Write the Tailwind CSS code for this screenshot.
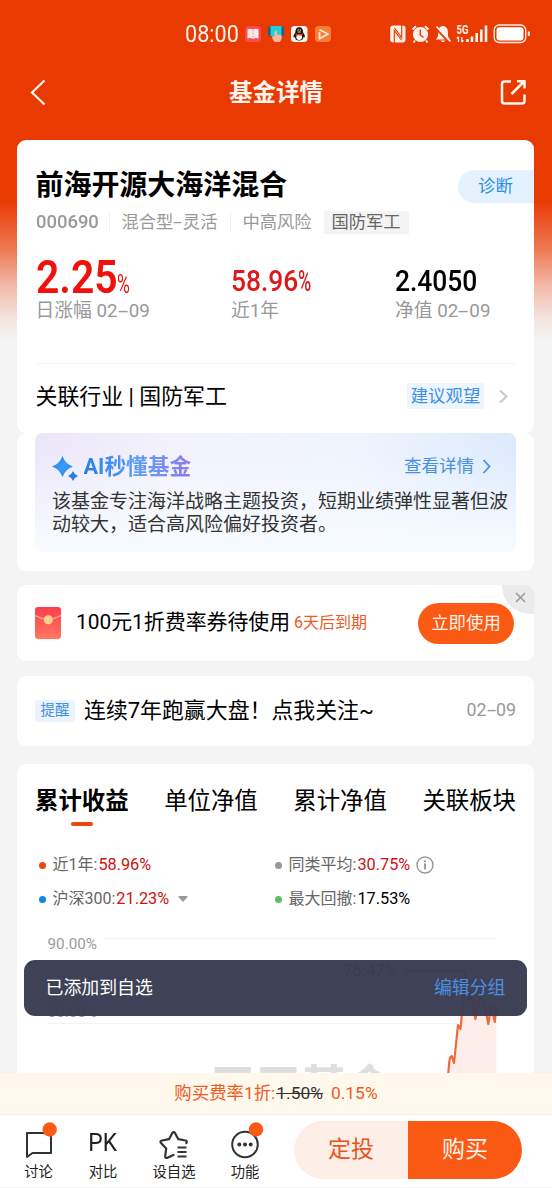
<!DOCTYPE html>
<html lang="zh-CN">
<head>
<meta charset="utf-8">
<title>基金详情</title>
<script src="https://cdn.jsdelivr.net/npm/@tailwindcss/browser@4"></script>
</head>
<body class="bg-[#f4f4f4]">
<div class="relative flex h-[1188px] w-[552px] flex-col overflow-hidden bg-[linear-gradient(to_bottom,#e93a02_0px,#e93a02_200px,#ee7a56_250px,#f2b8a6_285px,#f4e6e2_320px,#f4f4f4_342px)] font-[Roboto,'Noto_Sans_CJK_SC',sans-serif] leading-[1.4] text-black">

  <!-- status bar -->
  <div class="flex h-[68px] shrink-0 items-center pl-[185px] text-[#fff2ea]">
    <div class="w-[60px] whitespace-nowrap text-[24px] leading-none"><span class="inline-block origin-left scale-x-[0.9]">08:00</span></div>
    <svg class="h-[18px] w-[88px] shrink-0" viewBox="0 0 88 18">
      <rect x="0" y="1" width="16" height="16" rx="3.5" fill="#f94b55"/>
      <path d="M2.5 4.2Q5.500 3 8 4.500Q10.500 3 13.500 4.200V13.500Q10.500 12.500 8 14Q5.500 12.500 2.500 13.500Z" fill="#ffe9e6"/><path d="M8 4.500V14" stroke="#f9a3a3" stroke-width=".8"/>
      <rect x="23" y="1" width="16" height="10.500" rx="2" fill="#27606c"/><rect x="25.500" y="1" width="11" height="10" fill="#1fd0dc"/>
      <path d="M29.500 6.500Q31 5 32 7V9.500L36 10Q37.500 11 36.500 14L35 17H29.500L27 13Q26.500 10.500 29.500 11Z" fill="#f6b79f"/>
      <rect x="46" y="1" width="16.500" height="16" rx="3.500" fill="#fff6ee"/>
      <path d="M54.200 2.200C57 2.200 58.200 4.200 58 7.200C59.500 9.200 60.200 11 59.800 12.500L58.500 12C58.200 14.500 57 15.500 54.200 15.500S50.200 14.500 49.900 12L48.600 12.500C48.200 11 49 9.200 50.400 7.200C50.200 4.200 51.500 2.200 54.200 2.200Z" fill="#151515"/>
      <ellipse cx="54.200" cy="12" rx="2.900" ry="3" fill="#fff"/><path d="M50.500 8.200Q54.200 10.200 58 8.200V9.700Q54.200 11.500 50.500 9.700Z" fill="#e53025"/><ellipse cx="54.200" cy="7" rx="2" ry=".8" fill="#f5a623"/><circle cx="53.200" cy="4.900" r=".7" fill="#fff"/><circle cx="55.300" cy="4.900" r=".7" fill="#fff"/>
      <rect x="70" y="1" width="16" height="16" rx="3.500" fill="#fb7c35"/>
      <path d="M74.500 7V13.800L83 9L74.500 4.800" fill="none" stroke="#ffe9d8" stroke-width="1.800" stroke-linejoin="round"/>
    </svg>
    <svg class="ml-[55px] h-[22px] w-[144px] shrink-0" viewBox="388 23 144 22" fill="none">
      <rect x="390.200" y="25.500" width="15.300" height="17" rx="3" fill="#fff2ea"/>
      <path d="M394.300 43V30.500L401.500 40M394.500 28L401.700 37.500V25" stroke="#e93a02" stroke-width="1.200"/>
      <circle cx="420.500" cy="34.500" r="7.600" fill="#fff2ea"/>
      <path d="M412.500 29.500L416 26.300M428.500 29.500L425 26.300M415 40.500L413.500 42.500M426 40.500L427.500 42.500" stroke="#fff2ea" stroke-width="2"/>
      <path d="M420.300 29.500V35L423.500 37.500" stroke="#e93a02" stroke-width="1.500"/>
      <path d="M443 26C447 26.500 448 29.500 448 33V36.500L450 39.500H436L438 36.500V33C438 29.500 439 26.500 443 26ZM440.500 40.500H445.500Q443 43.500 440.500 40.500Z" fill="#fff2ea"/>
      <path d="M436 28.500L449.500 43" stroke="#e93a02" stroke-width="2"/><path d="M436.500 26.500L450.500 41.500" stroke="#fff2ea" stroke-width="1.800"/>
      <text x="456.500" y="34.300" font-size="12" font-weight="700" textLength="12" lengthAdjust="spacingAndGlyphs" fill="#fff2ea">5G</text>
      <path d="M458.500 37V42M456.800 38.500L458.500 36.800M461.800 37V42M463.500 40.300L461.800 42" stroke="#fff2ea" stroke-width="1.300"/>
      <path d="M467.500 39V42M472 36.500V42M476.700 33V42M481.300 29.500V42M486 25.500V42" stroke="#fff2ea" stroke-width="2.600"/>
      <rect x="494.200" y="25" width="31.500" height="17.500" rx="5" stroke="#fff2ea" stroke-width="1.300"/>
      <rect x="496.500" y="27.200" width="27" height="13.200" rx="3" fill="#fff"/>
      <path d="M528.800 31.500V36" stroke="#fff2ea" stroke-width="2"/>
    </svg>
  </div>

  <!-- title bar -->
  <header class="flex h-[72px] shrink-0 items-start justify-between pl-[30px] pr-[25px] pt-[10px] text-[#fff4ee]">
    <svg class="h-[28px] w-[28px]" viewBox="30 78 28 28" fill="none" stroke="currentColor" stroke-width="2.200"><path d="M44.500 80.500L32 92.500L44.500 104.500"/></svg>
    <h1 class="mr-[5px] pt-[1px] text-[23.500px] font-bold leading-[28px]">基金详情</h1>
    <svg class="h-[28px] w-[28px]" viewBox="499 78 28 28" fill="none" stroke="currentColor" stroke-width="2.500"><path d="M511 81.500H504.500Q502 81.500 502 84V101Q502 103.500 504.500 103.500H522Q524.500 103.500 524.500 101V94.500M511.500 94L524 81.500M517 81.200H524.500V88.500"/></svg>
  </header>

  <main class="flex min-h-0 flex-1 flex-col overflow-hidden pl-[17px] pr-[18px]">
    <!-- fund summary -->
    <section class="h-[293px] shrink-0 rounded-[9px] bg-white pl-[18.500px]">
      <div class="flex h-[66px] items-start justify-between pt-[29px]">
        <h2 class="text-[28px] font-bold leading-[34px] tracking-[-0.050px]">前海开源大海洋混合</h2>
        <div class="mt-[1px] h-[33px] w-[76px] rounded-l-full bg-[#e3f2fe] pl-[20px] text-[17.500px] leading-[33px] text-[#2c8fe6]">诊断</div>
      </div>
      <div class="mt-[4px] flex h-[24px] items-center text-[17.300px] leading-[24px] text-[#999]">
        <span class="w-[73.500px] text-[19px] font-medium"><span class="inline-block origin-left scale-x-[0.970]">000690</span></span>
        <span class="h-[19px] w-px bg-[#eee]"></span>
        <span class="w-[119.500px] pl-[11.500px]">混合型<span class="inline-block w-[9.500px] origin-left scale-x-[1.900]">-</span>灵活</span>
        <span class="h-[19px] w-px bg-[#eee]"></span>
        <span class="w-[93px] pl-[12px]">中高风险</span>
        <span class="h-[23px] w-[85px] bg-[#f4f4f4] text-center leading-[23px] text-[#666]">国防军工</span>
      </div>
      <div class="flex h-[68px] items-end whitespace-nowrap leading-none">
        <div class="flex w-[195.500px] items-baseline text-[#f0100c]">
          <span class="w-[81px] text-[47px] font-semibold leading-[50px]"><span class="inline-block origin-left scale-x-[0.870]">2.25</span></span>
          <span class="text-[25px]"><span class="inline-block origin-left scale-x-[0.700]">%</span></span>
        </div>
        <div class="flex w-[164px] text-[30px] font-medium leading-[42px] text-[#dc1a1c]">
          <span class="w-[67px]"><span class="inline-block origin-left scale-x-[0.880]">58.96</span></span>
          <span class="inline-block origin-left scale-x-[0.600]">%</span>
        </div>
        <div class="text-[30px] font-medium leading-[42px]"><span class="inline-block origin-left scale-x-[0.880]">2.4050</span></div>
      </div>
      <div class="mt-[-3px] flex h-[24px] whitespace-nowrap text-[18.800px] leading-[25px] text-[#999]">
        <span class="w-[195.500px]">日涨幅 02<span class="inline-block w-[11px] origin-left scale-x-[2]">-</span>09</span>
        <span class="w-[164px]">近1年</span>
        <span>净值 02<span class="inline-block w-[11px] origin-left scale-x-[2]">-</span>09</span>
      </div>
      <div class="mr-[18px] mt-[40px] flex h-[66px] items-center border-t border-[#f4f4f4]">
        <span class="flex-1 text-[21.900px] leading-[28px]">关联行业 | 国防军工</span>
        <span class="mt-[-2px] h-[26px] w-[77px] rounded-[2px] bg-[#edf5fe] text-center text-[17.400px] leading-[26px] text-[#3f8ee8]">建议观望</span>
        <svg class="ml-[14px] mr-[6px] h-[16px] w-[12px]" viewBox="0 1 12 16" fill="none" stroke="#c8c8c8" stroke-width="2"><path d="M2 2.500L8.500 8.500L2 14.500"/></svg>
      </div>
    </section>

    <!-- AI summary -->
    <section class="h-[137.500px] shrink-0 rounded-[9px] bg-white px-[18px]">
      <div class="h-[119px] rounded-[8px] bg-[linear-gradient(to_bottom,#f6faff00_15%,#f7fbff_95%),linear-gradient(100deg,#ebe6fa_0%,#f3f2fc_28%,#eff4fd_65%,#dae9fe_100%)] pl-[17px] pt-[19px]">
        <div class="flex h-[28px] items-center">
          <svg class="mt-[4px] h-[25px] w-[27px]" viewBox="0 0 27 25"><defs><linearGradient id="g" x1="0" y1="0" x2="1" y2="1"><stop offset="0" stop-color="#2176e0"/><stop offset=".5" stop-color="#3b9bfd"/><stop offset="1" stop-color="#2f80e8"/></linearGradient></defs><path d="M10.500 0Q13.200 7.800 21 10.500Q13.200 13.200 10.500 21Q7.800 13.200 0 10.500Q7.800 7.800 10.500 0Z" fill="url(#g)"/><path d="M21 15Q22.300 18.700 26 20Q22.300 21.300 21 25Q19.700 21.300 16 20Q19.700 18.700 21 15Z" fill="#2f7de0"/></svg>
          <span class="ml-[4.500px] flex-1 pt-[1px]"><span class="bg-linear-to-r from-[#257fe8] via-[#5b9df8] to-[#8b7bec] bg-clip-text text-[21.700px] font-bold leading-[28px] text-transparent">AI秒懂基金</span></span>
          <span class="text-[17.500px] text-[#4a90e2]">查看详情</span>
          <svg class="ml-[7px] mr-[23px] h-[16px] w-[12px]" viewBox="0 0 12 16" fill="none" stroke="#4a90e2" stroke-width="1.800"><path d="M2.500 2L8.500 8.500L2.500 15"/></svg>
        </div>
        <p class="mt-[11px] whitespace-nowrap text-[19px] leading-[22.500px] text-[#333]">该基金专注海洋战略主题投资，短期业绩弹性显著但波<br>动较大，适合高风险偏好投资者。</p>
      </div>
    </section>

    <!-- coupon -->
    <section class="relative mt-[14.500px] flex h-[76px] shrink-0 items-center overflow-hidden rounded-[9px] bg-white pl-[18px] pr-[20px]">
      <svg class="h-[32px] w-[26px]" viewBox="0 0 26 32"><defs><linearGradient id="r" x1="0" y1="0" x2="0" y2="1"><stop offset="0" stop-color="#fb3d4c"/><stop offset="1" stop-color="#ff7863"/></linearGradient></defs><rect width="26" height="32" rx="3" fill="url(#r)"/><path d="M0 8.500Q13 16 26 8.500" fill="none" stroke="#ffb27c" stroke-width="1.200"/><circle cx="13.300" cy="12.800" r="4.600" fill="#fccf8d"/></svg>
      <span class="ml-[15px] w-[218px] whitespace-nowrap text-[20.900px]">100元1折费率券待使用</span>
      <span class="flex-1 whitespace-nowrap text-[16px] text-[#ee5a24]">6天后到期</span>
      <span class="h-[41px] w-[96px] rounded-full bg-[#fa5a14] text-center text-[17.400px] leading-[41px] text-[#fff2ea]">立即使用</span>
      <span class="absolute right-0 top-0 h-[29px] w-[32px] rounded-bl-[28px] bg-[#ebebeb]"><svg class="ml-[13px] mt-[7px] h-[11px] w-[11px]" viewBox="0 0 11 11" stroke="#999" stroke-width="1.500"><path d="M1 1L10 10M10 1L1 10"/></svg></span>
    </section>

    <!-- reminder -->
    <section class="mt-[15px] flex h-[69.500px] shrink-0 items-center rounded-[9px] bg-white px-[18px]">
      <span class="h-[22px] w-[40px] rounded-[3px] bg-[#eaf3fe] text-center text-[14.500px] leading-[22px] text-[#3f8ee8]">提醒</span>
      <span class="ml-[9px] flex-1 whitespace-nowrap pt-[1px] text-[21.900px]">连续7年跑赢大盘！点我关注~</span>
      <span class="whitespace-nowrap text-[17.800px] text-[#999]">02<span class="inline-block w-[9.500px] origin-left scale-x-[1.900]">-</span>09</span>
    </section>

    <!-- performance -->
    <section class="mt-[18px] h-[320px] shrink-0 rounded-t-[9px] bg-white">
      <div class="flex justify-between px-[18px] pt-[20px] text-[23.400px] leading-[34px]">
        <span class="flex flex-col items-center font-bold">累计收益<i class="mt-[4px] h-[4px] w-[22px] rounded-full bg-[#e8480f]"></i></span>
        <span>单位净值</span><span>累计净值</span><span>关联板块</span>
      </div>
      <div class="grid grid-cols-[236px_1fr] pl-[22px] pt-[22.500px] text-[16px] leading-[34px] text-[#666]">
        <div class="flex items-center"><i class="mr-[6.500px] h-[7px] w-[7px] rounded-full bg-[#e8480f]"></i>近1年:<b class="ml-[1px] text-[16.300px] font-normal text-[#cf1010]">58.96%</b></div>
        <div class="flex items-center"><i class="mr-[6.500px] h-[7px] w-[7px] rounded-full bg-[#999]"></i>同类平均:<b class="ml-[1px] text-[16.300px] font-normal text-[#cf1010]">30.75%</b>
          <svg class="ml-[5.500px] h-[18px] w-[18px]" viewBox="0 0 18 18" fill="none" stroke="#999"><circle cx="9" cy="9" r="8" stroke-width="1.400"/><path d="M9 7.500V13.500M9 4.200V6" stroke-width="1.900"/></svg></div>
        <div class="flex items-center"><i class="mr-[6.500px] h-[7px] w-[7px] rounded-full bg-[#1385ea]"></i>沪深300:<b class="ml-[1px] text-[16.300px] font-normal text-[#cf1010]">21.23%</b>
          <svg class="ml-[9px] h-[6px] w-[10px]" viewBox="0 0 10 6"><path d="M1 0H9Q10 .3 9.500 1L5.500 5.600Q5 6 4.500 5.600L.5 1Q0 .3 1 0Z" fill="#999"/></svg></div>
        <div class="flex items-center"><i class="mr-[6.500px] h-[7px] w-[7px] rounded-full bg-[#5cbf63]"></i>最大回撤:<b class="ml-[1px] text-[16.300px] font-normal text-black">17.53%</b></div>
      </div>
      <svg class="mt-[8.500px] block h-[148px] w-[517px]" viewBox="17 925 517 148">
        <path d="M104 938.500H496M48 1023.500H496" stroke="#f3f3f3"/>
        <text x="47.500" y="949" font-size="15.500" fill="#999" textLength="49.500" lengthAdjust="spacingAndGlyphs">90.00%</text>
        <text x="47.500" y="1017" font-size="15.500" fill="#999" textLength="49.500" lengthAdjust="spacingAndGlyphs">60.00%</text>
        <text x="343" y="976" font-size="16.500" fill="#666" textLength="54" lengthAdjust="spacingAndGlyphs">76.47%</text>
        <path d="M405 971H465V976" fill="none" stroke="#666" stroke-width="1.500"/>
        <text x="210" y="1103" font-size="45.500" font-weight="700" fill="#dedede">天天基金</text>
        <path d="M448.300 1073L449.300 1061.500L450.200 1057.500L451.700 1056L454 1063L458 1025L460.500 1029L462.300 1010L465.500 976L469 1000L471 992L475.300 1019L480 997L484 1002L488.300 1024L491 1006L494.800 1022L496.300 1005V1073Z" fill="#fdeee9"/>
        <path d="M448.300 1073L449.300 1061.500L450.200 1057.500L451.700 1056L454 1063L458 1025L460.500 1029L462.300 1010L465.500 976L469 1000L471 992L475.300 1019L480 997L484 1002L488.300 1024L491 1006L494.800 1022L496.300 1005" fill="none" stroke="#ee6a3c" stroke-width="2.200" stroke-linejoin="round"/>
      </svg>
    </section>
  </main>

  <!-- purchase rate -->
  <div class="flex h-[41.500px] shrink-0 items-center justify-center border-b border-[#f3efe4] bg-[#fef9ec] text-[17.400px] text-[#ee5a24]">
    <span>购买费率1折:</span><span class="ml-px text-[#333] line-through">1.50%</span><span class="ml-[8px]">0.15%</span>
  </div>

  <!-- bottom actions -->
  <nav class="flex h-[73.500px] shrink-0 border-b border-[#f4f4f4] bg-white pt-[6px] text-center text-[14.300px] leading-[22px] text-[#222]">
    <div class="flex w-[77px] flex-col items-center"><svg class="h-[40px] w-[77px]" viewBox="0 1116 77 40" fill="none"><path d="M27 1128H51V1148H32.500L27 1152Z" stroke="#333" stroke-width="2" stroke-linejoin="round"/><circle cx="49.700" cy="1124.500" r="7.200" fill="#fa5a14"/></svg>讨论</div>
    <div class="flex w-[52px] flex-col items-center"><div class="h-[40px] text-[26.500px] leading-[42px]"><span class="inline-block scale-x-[0.860]">PK</span></div>对比</div>
    <div class="flex w-[90px] flex-col items-center"><svg class="h-[40px] w-[90px]" viewBox="129 1117 90 40" fill="none" stroke="#333" stroke-width="2.200" stroke-linejoin="round" stroke-linecap="round"><path d="M173.500 1151L167.500 1153.800Q164.800 1154.300 165.200 1151.800L166.200 1144.500L161 1139Q159.500 1137 162 1136.500L169 1135.200L172.300 1129Q173.600 1127.200 175 1129L178.300 1135.200L185.300 1136.500Q187.800 1137 186.300 1139.200"/><path d="M177.500 1143.500H186.500M177.500 1148H186.500M177.500 1152.500H186.500" stroke-linecap="butt"/></svg>设自选</div>
    <div class="flex w-[52px] flex-col items-center"><svg class="h-[40px] w-[52px]" viewBox="219 1116 52 40" fill="none"><circle cx="245" cy="1139.500" r="12.800" stroke="#333" stroke-width="2"/><path d="M239.300 1139.500h.01M245 1139.500h.01M250.700 1139.500h.01" stroke="#333" stroke-width="4" stroke-linecap="round"/><circle cx="256" cy="1124.500" r="7.200" fill="#fa5a14"/></svg>功能</div>
    <div class="ml-[23px] flex h-[58px] w-[228px] overflow-hidden rounded-full text-[23px] leading-[58px]">
      <span class="w-1/2 bg-[#fdeee8] text-[#e8541a]">定投</span><span class="w-1/2 bg-[#fa5a14] text-[#fff2ea]">购买</span>
    </div>
  </nav>

  <!-- toast -->
  <div class="absolute left-[24px] top-[960px] flex h-[55.500px] w-[502.500px] items-center justify-between rounded-[11px] bg-[#373a50]/96 pl-[21.500px] pr-[21px] text-[17.900px] text-white">
    <span>已添加到自选</span><span class="text-[#4a90e2]">编辑分组</span>
  </div>
</div>
</body>
</html>
